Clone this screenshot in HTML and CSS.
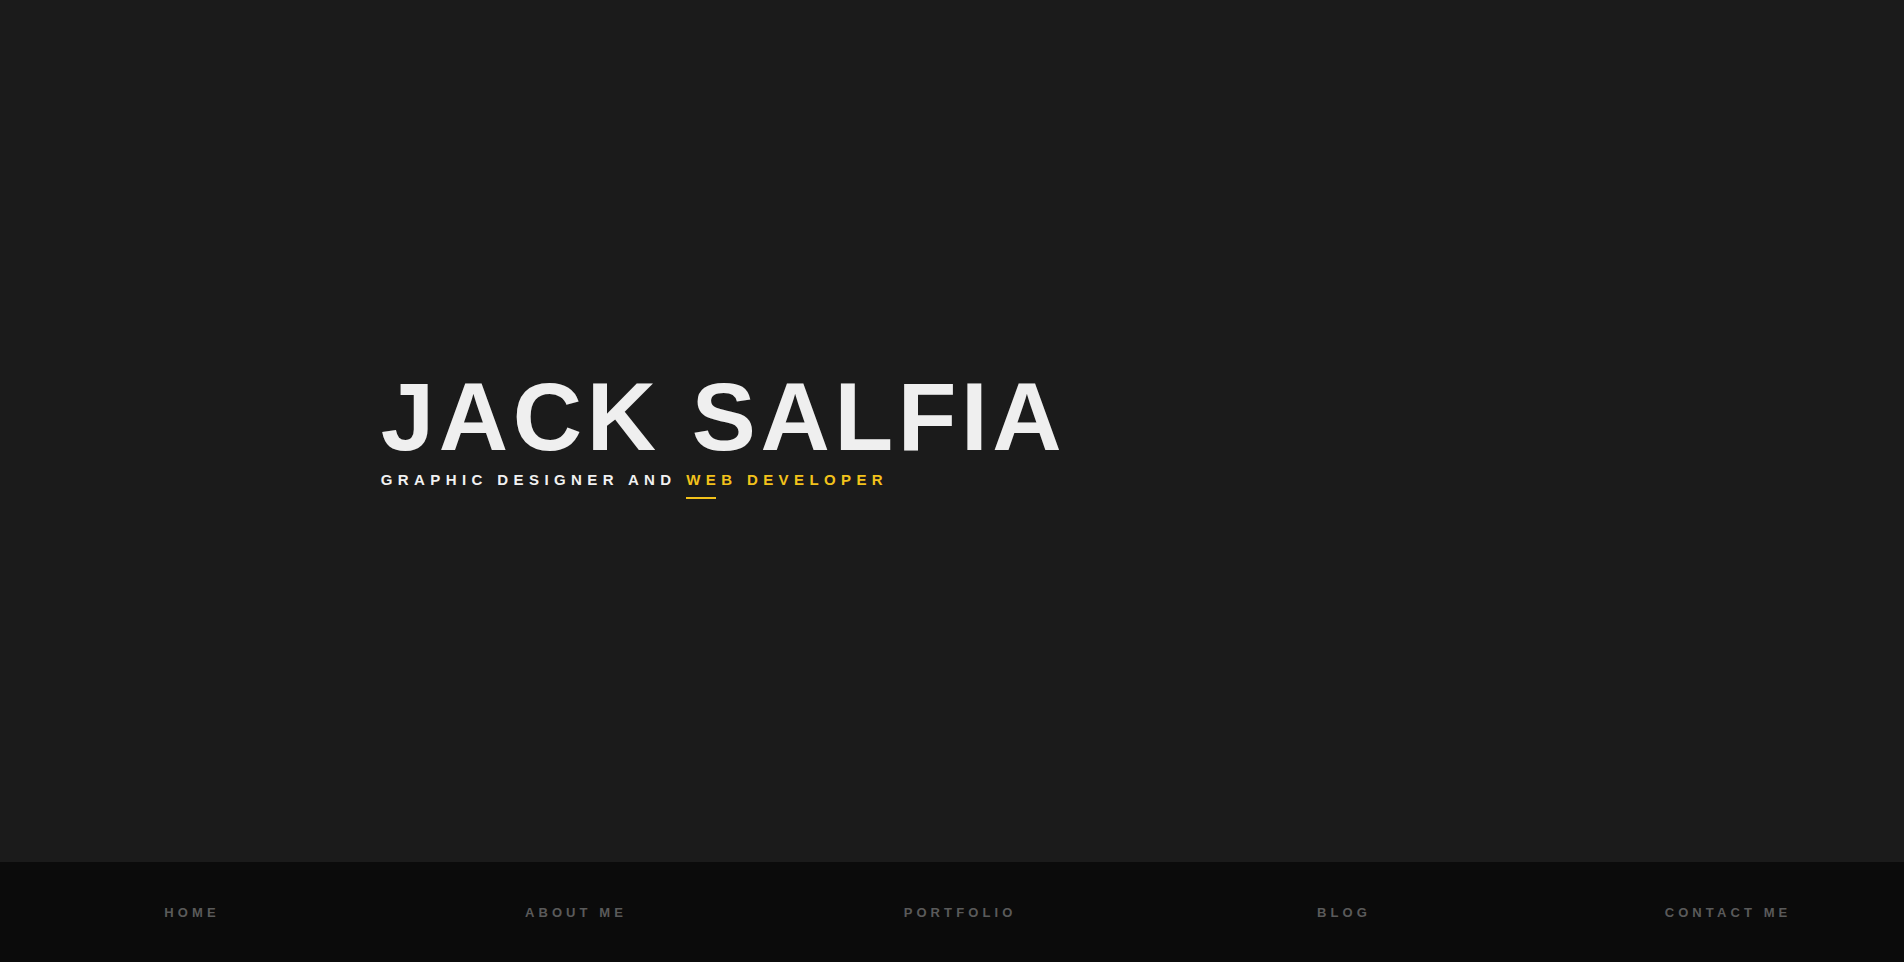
FILE: index.html
```html
<!DOCTYPE html>
<html lang="en">
<head>
<meta charset="utf-8">
<title>Jack Salfia</title>
<link rel="stylesheet" href="styles.css">
</head>
<body>
  <div class="page">
    <header class="hero">
      <div class="hero-inner">
        <h1 class="name">JACK SALFIA</h1>
        <p class="role">GRAPHIC DESIGNER AND <span class="accent">WEB DEVELOPER<span class="bar"></span></span></p>
      </div>
    </header>
    <nav class="nav">
      <a class="nav-item" href="#">HOME</a>
      <a class="nav-item" href="#">ABOUT ME</a>
      <a class="nav-item" href="#">PORTFOLIO</a>
      <a class="nav-item" href="#">BLOG</a>
      <a class="nav-item" href="#">CONTACT ME</a>
    </nav>
  </div>
</body>
</html>
```

FILE: styles.css
```css
html, body {
  margin: 0;
  padding: 0;
  height: 100%;
  overflow: hidden;
  background: #1b1b1b;
}

body {
  font-family: "Liberation Sans", Arial, sans-serif;
}

.page {
  display: flex;
  flex-direction: column;
  height: 962px;
}

.hero {
  height: 862px;
  display: flex;
  flex-direction: column;
  justify-content: center;
  padding-left: 20%;
  padding-bottom: 6px;
  box-sizing: border-box;
  background: #1b1b1b;
}

.hero-inner {
  display: flex;
  flex-direction: column;
  align-items: flex-start;
}

.name {
  margin: 0;
  font-size: 96px;
  line-height: 96px;
  font-weight: 700;
  letter-spacing: 4.6px;
  color: #efefef;
}

.role {
  margin: 6px 0 0 0;
  font-size: 15px;
  line-height: 17px;
  font-weight: 700;
  letter-spacing: 5.4px;
  color: #f1f1f1;
}

.accent {
  position: relative;
  color: #f2c21b;
}

.bar {
  position: absolute;
  left: 0;
  top: 26px;
  width: 30px;
  height: 2px;
  background: #f2c21b;
}

.nav {
  height: 100px;
  width: calc(100% + 16px);
  display: grid;
  grid-template-columns: repeat(5, 1fr);
  align-items: center;
  background: #0b0b0b;
}

.nav-item {
  text-align: center;
  font-size: 13px;
  font-weight: 700;
  letter-spacing: 4.1px;
  color: #5a5a5a;
  text-decoration: none;
}
```
